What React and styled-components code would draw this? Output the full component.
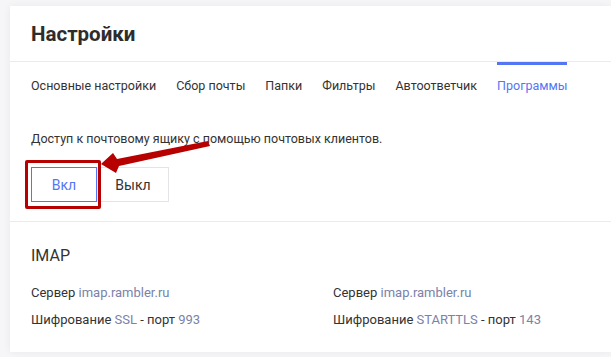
import styled, { createGlobalStyle } from "styled-components";

const GlobalStyle = createGlobalStyle`
    html, body {
        margin: 0;
        padding: 0;
        background: #f6f6f8;
        font-family: Roboto, "Liberation Sans", Arial, sans-serif;
        color: #333333;
    }
`;

const tabs = [
    "Основные настройки",
    "Сбор почты",
    "Папки",
    "Фильтры",
    "Автоответчик",
    "Программы",
];

function App() {
    return (
        <Page>
            <GlobalStyle />
            <Card>
                <Header>
                    <Title>Настройки</Title>
                </Header>
                <Tabs>
                    {tabs.map((tab) => (
                        <Tab key={tab} $active={tab === "Программы"}>
                            {tab}
                        </Tab>
                    ))}
                </Tabs>
                <Section>
                    <Text>Доступ к почтовому ящику с помощью почтовых клиентов.</Text>
                    <Toggle>
                        <ToggleButton $active>Вкл</ToggleButton>
                        <ToggleButton>Выкл</ToggleButton>
                    </Toggle>
                </Section>
                <Protocol>
                    <ProtocolTitle>IMAP</ProtocolTitle>
                    <Grid>
                        <Row>
                            Сервер <Value>imap.rambler.ru</Value>
                        </Row>
                        <Row>
                            Сервер <Value>imap.rambler.ru</Value>
                        </Row>
                        <Row>
                            Шифрование <Value>SSL</Value> - порт <Value>993</Value>
                        </Row>
                        <Row>
                            Шифрование <Value>STARTTLS</Value> - порт <Value>143</Value>
                        </Row>
                    </Grid>
                </Protocol>
            </Card>

            {/* annotation drawn over the screenshot */}
            <Highlight />
            <Arrow viewBox="0 0 611 357">
                <polygon
                    points="101,164 113,153 117,159 208,141 210,146 119,166 116,173"
                    fill="#b70000"
                />
            </Arrow>
        </Page>
    );
}

const Page = styled.div`
    position: relative;
    width: 611px;
    height: 357px;
    overflow: hidden;
`;

const Card = styled.div`
    margin: 6px 0 0 10px;
    height: 346px;
    background: #ffffff;
    box-shadow: 0 0 8px rgba(0, 0, 0, 0.06);
`;

const Header = styled.div`
    height: 55px;
    padding: 0 21px;
    display: flex;
    align-items: center;
    border-bottom: 1px solid #ebebef;
`;

const Title = styled.h1`
    margin: 0;
    font-size: 20.5px;
    font-weight: 700;
    line-height: 26px;
    color: #2d2d2d;
`;

const Tabs = styled.div`
    display: flex;
    gap: 20px;
    padding: 0 21px;
`;

const Tab = styled.div`
    padding-top: 11px;
    border-top: 3px solid ${(p) => (p.$active ? "#5476f5" : "transparent")};
    font-size: 12.5px;
    line-height: 20px;
    color: ${(p) => (p.$active ? "#5476f5" : "#333333")};
    white-space: nowrap;
`;

const Section = styled.div`
    padding: 33px 21px 19px;
    border-bottom: 1px solid #ebebef;
`;

const Text = styled.div`
    font-size: 12.5px;
    line-height: 20px;
`;

const Toggle = styled.div`
    display: flex;
    margin-top: 18px;
`;

const ToggleButton = styled.div`
    box-sizing: border-box;
    height: 35px;
    width: ${(p) => (p.$active ? "66px" : "72px")};
    display: flex;
    align-items: center;
    justify-content: center;
    border: 1px solid ${(p) => (p.$active ? "#5476f5" : "#e3e3e8")};
    color: ${(p) => (p.$active ? "#5476f5" : "#333333")};
    font-size: 14px;
`;

const Protocol = styled.div`
    padding: 24px 21px 0;
`;

const ProtocolTitle = styled.div`
    font-size: 16px;
    line-height: 20px;
    color: #333333;
`;

const Grid = styled.div`
    display: grid;
    grid-template-columns: 302px 1fr;
    row-gap: 7px;
    margin-top: 17px;
`;

const Row = styled.div`
    font-size: 13px;
    line-height: 20px;
    white-space: nowrap;
`;

const Value = styled.span`
    color: #7a82a8;
`;

const Highlight = styled.div`
    position: absolute;
    left: 25px;
    top: 160px;
    width: 76px;
    height: 49px;
    box-sizing: border-box;
    border: 3px solid #b70000;
    border-radius: 2px;
`;

const Arrow = styled.svg`
    position: absolute;
    left: 0;
    top: 0;
    width: 611px;
    height: 357px;
    pointer-events: none;
`;

export default App;
